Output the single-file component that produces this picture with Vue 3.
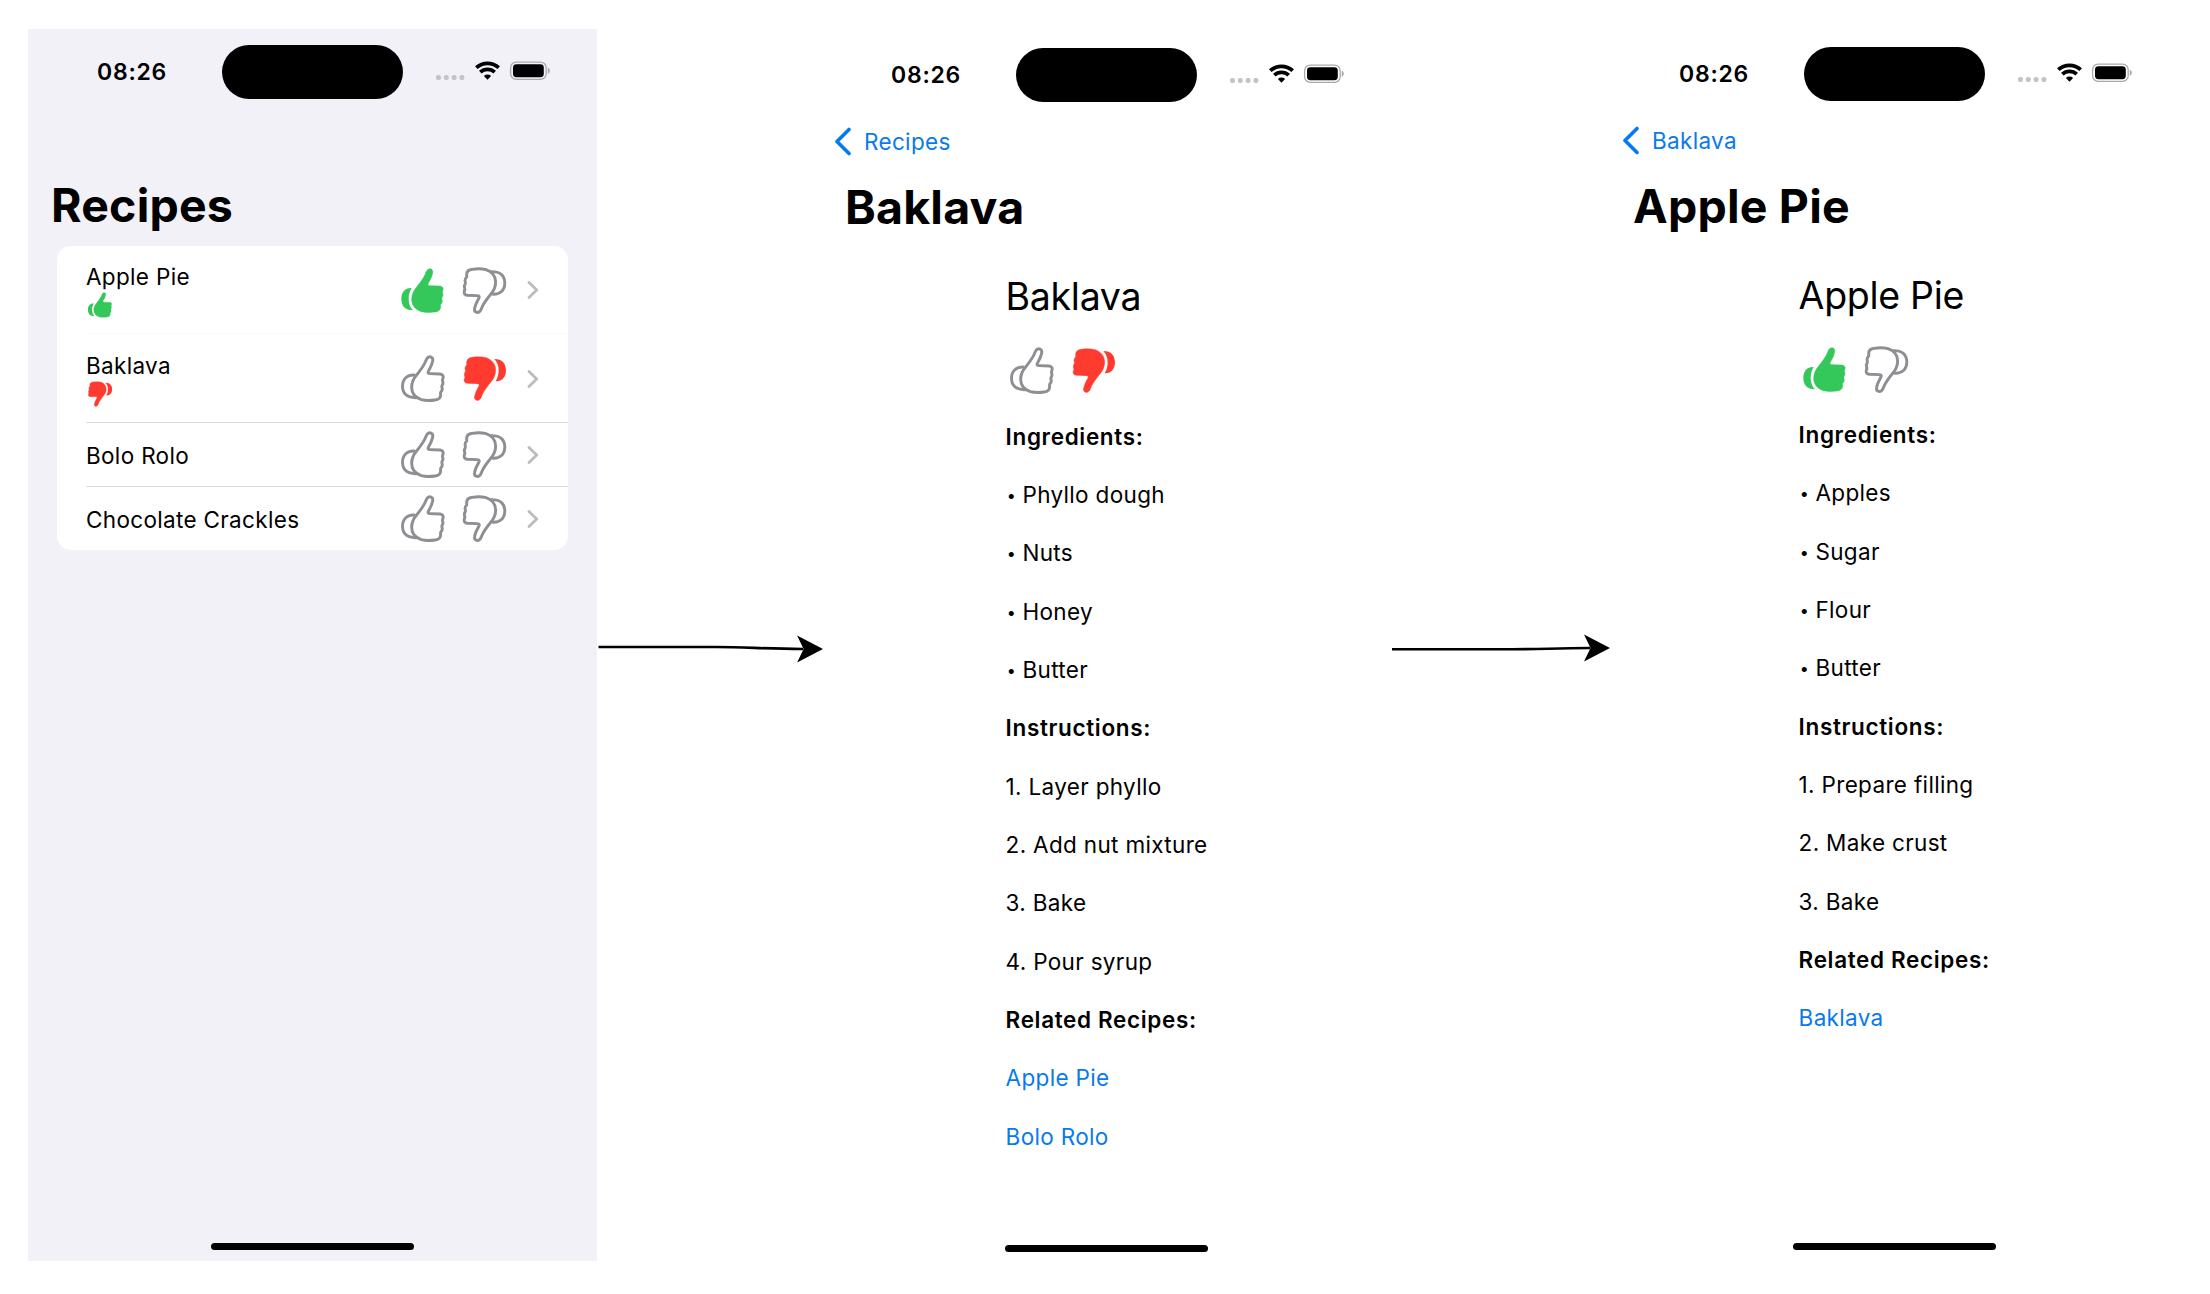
<script setup>
import { h } from 'vue'

const HAND =
  'M82 12C88 5 101 9 98 21C96 33 90 43 85 52C83 57 85 59 90 59L120 60C128 61 131 66 129 73C127 77 127 79 128 82C130 87 129 91 126 95C125 98 126 101 127 104C127 109 125 112 122 115C121 117 122 119 122 122C122 132 115 137 105 138C92 140 76 140 64 137C46 131 35 118 35 100C35 86 41 73 50 63C59 51 70 38 76 24C78 19 79 15 82 12Z'
const CUFF_LINE = 'M46 63.500C21 61 7.500 76 7.500 97C7.500 119 21 133 52 131'
const CUFF_FILL = 'M33 66C14 66 4 80 4 99C4 119 15 133 39 133C30 124 26 112 26 99C26 87 29 76 35 66Z'

const Thumb = (props) =>
  h(
    'svg',
    {
      viewBox: '0 0 136 148',
      class: ['thumb', props.down ? 'down' : 'up', { active: props.active, mini: props.mini }],
    },
    props.active
      ? [h('path', { class: 'solid hand', d: HAND }), h('path', { class: 'solid', d: CUFF_FILL })]
      : [h('path', { class: 'line', d: HAND }), h('path', { class: 'line', d: CUFF_LINE })]
  )
Thumb.props = { down: Boolean, active: Boolean, mini: Boolean }

const recipes = [
  { name: 'Apple Pie', vote: 'up' },
  { name: 'Baklava', vote: 'down' },
  { name: 'Bolo Rolo', vote: null },
  { name: 'Chocolate Crackles', vote: null },
]

const phones = [
  { id: 'list', title: 'Recipes' },
  {
    id: 'baklava',
    back: 'Recipes',
    title: 'Baklava',
    vote: 'down',
    ingredients: ['Phyllo dough', 'Nuts', 'Honey', 'Butter'],
    steps: ['Layer phyllo', 'Add nut mixture', 'Bake', 'Pour syrup'],
    related: ['Apple Pie', 'Bolo Rolo'],
  },
  {
    id: 'apple',
    back: 'Baklava',
    title: 'Apple Pie',
    vote: 'up',
    ingredients: ['Apples', 'Sugar', 'Flour', 'Butter'],
    steps: ['Prepare filling', 'Make crust', 'Bake'],
    related: ['Baklava'],
  },
]
</script>

<template>
  <main class="stage">
    <template v-for="(p, i) in phones" :key="p.id">
      <svg v-if="i === 1" class="arrow first" viewBox="0 0 226 40">
        <path class="shaft" d="M1.500 19H120C150 19 165 20.700 207 21" />
        <path d="M227 21L201 7.500L207.500 21L201 34.500Z" />
      </svg>
      <svg v-if="i === 2" class="arrow second" viewBox="0 0 220 40">
        <path class="shaft" d="M2 21.300H110C150 21.300 160 20.300 200 20" />
        <path d="M220 20L194 6.500L200.500 20L194 33.500Z" />
      </svg>

      <section class="phone" :class="p.id">
        <header class="status">
          <span class="time">08:26</span>
          <span class="island"></span>
          <svg class="indicators" viewBox="0 0 116 20" width="116" height="20">
            <g fill="#c4c4c8">
              <rect x="0" y="14" width="5" height="5" rx="2" />
              <rect x="7.800" y="14" width="5" height="5" rx="2" />
              <rect x="15.600" y="14" width="5" height="5" rx="2" />
              <rect x="23.400" y="14" width="5" height="5" rx="2" />
            </g>
            <g fill="none" stroke="#000" stroke-width="3.700">
              <path d="M40.300 6.700A16.500 16.500 0 0 1 62.700 6.700" />
              <path d="M44.300 11.200A10.400 10.400 0 0 1 58.700 11.200" />
            </g>
            <path d="M51.500 18.800L47.900 15A5.300 5.300 0 0 1 55.100 15Z" />
            <rect x="74.600" y="1.100" width="35.600" height="17.300" rx="5.600" fill="none" stroke="#a9a9ad" stroke-width="1.300" />
            <rect x="77" y="3.300" width="30.800" height="12.900" rx="3.400" />
            <path d="M111.800 6.800C114.500 7.900 114.500 11.600 111.800 12.700Z" fill="#a9a9ad" />
          </svg>
        </header>

        <nav class="back">
          <template v-if="p.back">
            <svg viewBox="0 0 18 29" width="18" height="29"><path d="M15 2.500L3 14.500L15 26.500" /></svg>
            <span>{{ p.back }}</span>
          </template>
        </nav>
        <h1>{{ p.title }}</h1>

        <ul v-if="p.id === 'list'" class="card">
          <li v-for="r in recipes" :key="r.name" :class="{ voted: r.vote }">
            <div class="label">
              <span>{{ r.name }}</span>
              <Thumb v-if="r.vote" mini active :down="r.vote === 'down'" />
            </div>
            <Thumb :active="r.vote === 'up'" />
            <Thumb down :active="r.vote === 'down'" />
            <svg class="chevron" viewBox="0 0 12 18" width="12" height="18"><path d="M2 1.500L9.700 9L2 16.500" /></svg>
          </li>
        </ul>

        <article v-else class="detail">
          <h2>{{ p.title }}</h2>
          <div class="votes">
            <Thumb :active="p.vote === 'up'" />
            <Thumb down :active="p.vote === 'down'" />
          </div>
          <h3>Ingredients:</h3>
          <p v-for="x in p.ingredients" :key="x"><span class="dot">•</span> {{ x }}</p>
          <h3>Instructions:</h3>
          <p v-for="(x, n) in p.steps" :key="x">{{ n + 1 }}. {{ x }}</p>
          <h3>Related Recipes:</h3>
          <a v-for="x in p.related" :key="x">{{ x }}</a>
        </article>

        <div class="home"></div>
      </section>
    </template>
  </main>
</template>

<style>
body {
  margin: 0;
  background: #fff;
}
</style>

<style scoped>
.stage {
  display: flex;
  align-items: flex-start;
  box-sizing: border-box;
  width: 2210px;
  height: 1294px;
  padding: 29px 0 0 28px;
  overflow: hidden;
  background: #fff;
  color: #000;
  font: 400 22.5px 'Inter', sans-serif;
  letter-spacing: 0.33px;
}
.phone {
  display: flex;
  flex: none;
  flex-direction: column;
  width: 568px;
  height: 1232px;
}
.list {
  width: 569px;
  background: #f2f1f8;
}
.baklava {
  margin-top: 3px;
}
.apple {
  margin-top: 2px;
}
.arrow {
  flex: none;
  height: 40px;
  margin-top: 599px;
  overflow: visible;
}
.first {
  width: 225px;
}
.second {
  width: 220px;
}
.shaft {
  fill: none;
  stroke: #000;
  stroke-width: 2.6;
}
.status {
  display: flex;
  align-items: center;
  flex: none;
  height: 85px;
}
.time {
  width: 125px;
  padding-left: 69px;
  font-size: 23px;
  font-weight: 600;
  letter-spacing: 0.75px;
}
.island {
  width: 181px;
  height: 54px;
  border-radius: 27px;
  background: #000;
}
.indicators {
  margin: 0 0 0.5px 33px;
}
.back {
  display: flex;
  align-items: center;
  flex: none;
  height: 48px;
  padding-left: 12px;
  color: #087aee;
}
.back svg {
  margin-right: 12px;
}
.back path {
  fill: none;
  stroke: #087aee;
  stroke-width: 3.6;
  stroke-linecap: round;
  stroke-linejoin: round;
}
h1,
h2,
h3,
p {
  margin: 0;
}
h1 {
  flex: none;
  height: 84px;
  padding-left: 23px;
  font-size: 46.5px;
  font-weight: 700;
  line-height: 85px;
  letter-spacing: 0.2px;
}
.list h1 {
  line-height: 86px;
}
.card {
  width: 511px;
  margin: 0 0 0 29px;
  padding: 0;
  border-radius: 14px;
  background: #fff;
  list-style: none;
}
li {
  display: flex;
  align-items: center;
  box-sizing: border-box;
  height: 64px;
  padding-left: 29px;
  background: linear-gradient(#dcdcde, #dcdcde) 29px 100% / 482px 1.5px no-repeat;
}
li:first-child {
  background: linear-gradient(#fafafa, #fafafa) 29px 100% / 482px 1.5px no-repeat;
}
li:last-child {
  height: 63px;
  background: none;
}
li.voted {
  height: 88.5px;
}
.label {
  display: flex;
  flex-direction: column;
  width: 314px;
  padding-top: 2px;
  line-height: 30px;
}
.voted .label {
  padding-top: 1px;
}
.thumb {
  flex: none;
  width: 45.3px;
  height: 49.3px;
}
.thumb + .thumb {
  margin-left: 17px;
}
.thumb.mini {
  width: 26px;
  height: 28px;
  margin: -1px 0 0 1px;
}
.down {
  transform: rotate(180deg);
}
.up.active {
  color: #34c759;
}
.down.active {
  color: #ff3b30;
}
:deep(.line) {
  fill: none;
  stroke: #8e8e93;
  stroke-width: 8.8;
  stroke-linejoin: round;
}
:deep(.solid) {
  fill: currentColor;
}
:deep(.hand) {
  stroke: currentColor;
  stroke-width: 1.5;
}
.chevron {
  margin-left: 19.4px;
}
.chevron path {
  fill: none;
  stroke: #bcbcc0;
  stroke-width: 2.8;
  stroke-linecap: round;
  stroke-linejoin: round;
}
.detail {
  display: flex;
  flex-direction: column;
  padding-left: 183.6px;
}
.apple .detail {
  padding-left: 188.6px;
}
h2 {
  height: 96.5px;
  font-size: 37.5px;
  font-weight: 400;
  line-height: 95px;
  letter-spacing: -0.3px;
}
.baklava h2 {
  height: 97px;
}
.votes {
  display: flex;
  height: 61.6px;
  padding-left: 3.4px;
}
h3,
p,
a {
  height: 58.33px;
  font-size: 22.5px;
  line-height: 58.33px;
}
h3 {
  font-weight: 600;
  letter-spacing: 0.65px;
}
.dot {
  display: inline-block;
  width: 10.2px;
  font-size: 16px;
  line-height: 20px;
  text-indent: 1.2px;
  vertical-align: 2px;
}
a {
  color: #087aee;
}
.home {
  flex: none;
  width: 203px;
  height: 7px;
  margin: auto 0 13px 183px;
  border-radius: 4px;
  background: #000;
}
.list .home {
  margin-bottom: 11px;
}
.baklava .home {
  margin-bottom: 12px;
}
</style>
